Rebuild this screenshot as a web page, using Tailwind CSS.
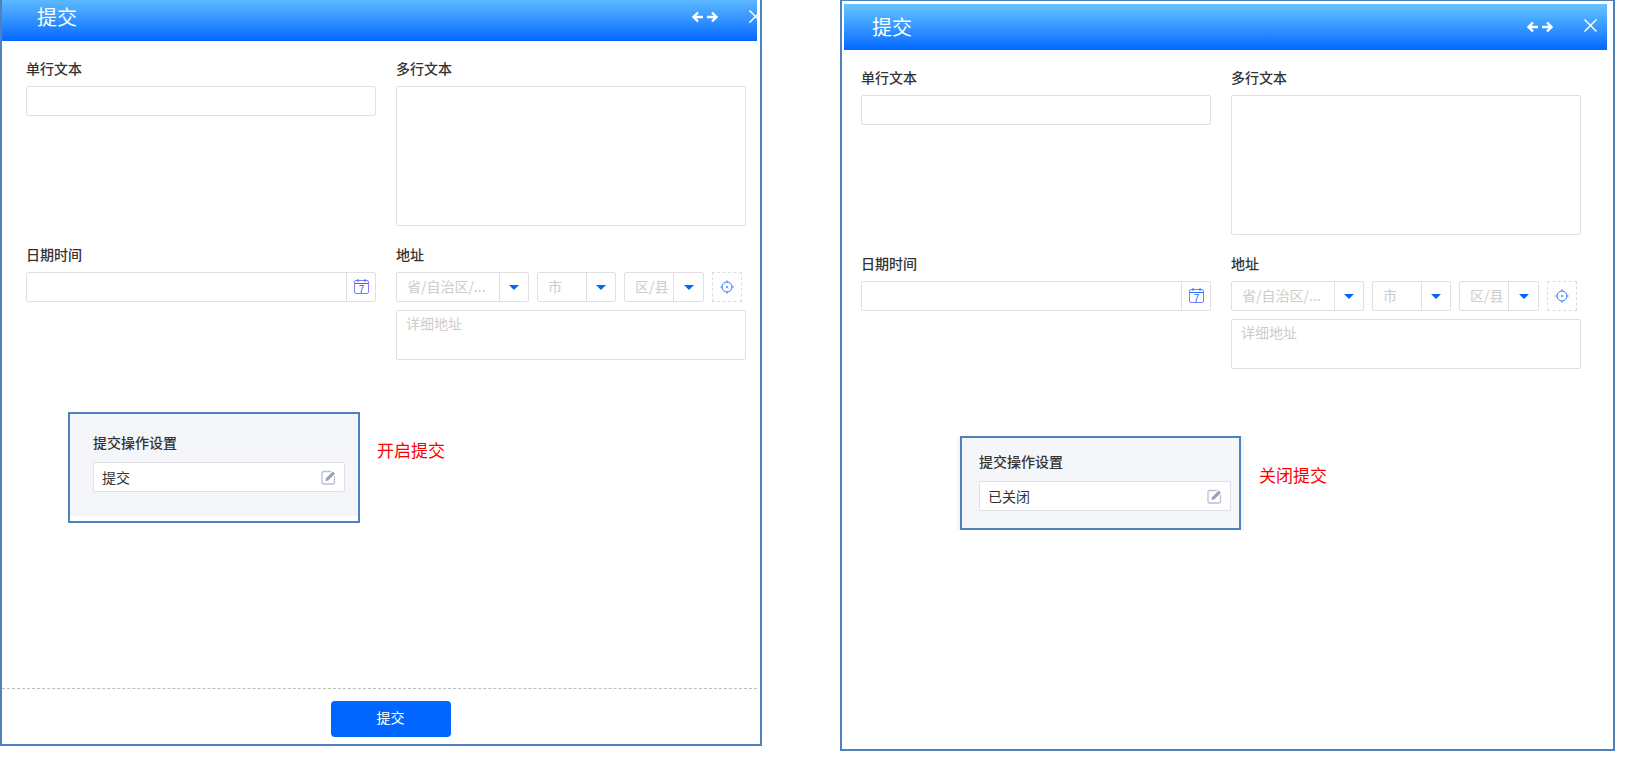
<!DOCTYPE html>
<html lang="zh-CN">
<head>
  <meta charset="UTF-8">
  <meta name="viewport" content="width=device-width, initial-scale=1.0">
  <title>提交操作设置</title>
  <script src="https://cdn.jsdelivr.net/npm/@tailwindcss/browser@4"></script>
</head>
<body class="bg-white font-['Noto_Sans_CJK_SC','Noto_Sans',sans-serif] text-sm text-[#333]">
  <div class="flex items-start w-[1641px] h-[784px] overflow-hidden">

    <!-- open state -->
    <section class="flex flex-col shrink-0 w-[762px] h-[746px] border-x-2 border-b-2 border-[#4f81bd]">
      <header class="flex items-center shrink-0 w-[755px] h-[41px] pb-[7px] pl-[35px] overflow-hidden bg-gradient-to-b from-[#5cb8ff] to-[#0066ff] text-white">
        <h1 class="flex-1 -mt-px text-[20px] leading-[28px]">提交</h1>
        <svg class="shrink-0" width="26" height="12" viewBox="0 0 26 12" fill="none" stroke="white" stroke-width="2.400"><path d="M11 6H2M6 1.500 1.500 6 6 10.500M15 6h9M20 1.500 24.500 6 20 10.500"/></svg>
        <svg class="shrink-0 ml-[31px] -mr-[5px] -mt-[2px]" width="13" height="13" viewBox="0 0 13 13" fill="none" stroke="white" stroke-width="1.500"><path d="m.5.500 12 12M12.500.500l-12 12"/></svg>
      </header>

      <div class="grid grid-cols-[350px_350px] gap-x-5 pl-6 pt-[17px] leading-5">
        <div>
          <label class="block mb-2 font-medium">单行文本</label>
          <div class="h-[30px] border border-[#e0e0e0] rounded-[2px]"></div>
        </div>
        <div>
          <label class="block mb-2 font-medium">多行文本</label>
          <div class="h-[140px] border border-[#e0e0e0] rounded-[2px]"></div>
        </div>
        <div class="mt-[18px]">
          <label class="block mb-2 font-medium">日期时间</label>
          <div class="flex justify-end h-[30px] border border-[#e0e0e0] rounded-[2px]">
            <span class="flex items-center justify-center w-[29px] border-l border-[#e0e0e0]">
              <svg class="-mt-[2px]" width="15" height="15" viewBox="0 0 15 15" fill="none"><rect x=".5" y="1.500" width="14" height="13" rx="1.500" stroke="#7f7bff"/><path d="M1 4.500h13" stroke="#1f70ff"/><path d="M4 0v3M11 0v3" stroke="#1f70ff"/><text x="7.500" y="13.500" text-anchor="middle" font-size="10" fill="#1f63ff" font-family="Liberation Sans">7</text></svg>
            </span>
          </div>
        </div>
        <div class="mt-[18px]">
          <label class="block mb-2 font-medium">地址</label>
          <div class="flex gap-2 text-[#ccc]">
            <div class="flex w-[133px] h-[30px] border border-[#e0e0e0] rounded-[2px]">
              <span class="flex-1 pl-[10px] leading-[26px] whitespace-nowrap overflow-hidden">省/自治区/...</span>
              <span class="flex items-center justify-center w-[29px] border-l border-[#e0e0e0]"><span class="w-0 h-0 border-x-[5px] border-t-[5px] border-x-transparent border-t-[#0066ff]"></span></span>
            </div>
            <div class="flex w-[79px] h-[30px] border border-[#e0e0e0] rounded-[2px]">
              <span class="flex-1 pl-[10px] leading-[26px]">市</span>
              <span class="flex items-center justify-center w-[29px] border-l border-[#e0e0e0]"><span class="w-0 h-0 border-x-[5px] border-t-[5px] border-x-transparent border-t-[#0066ff]"></span></span>
            </div>
            <div class="flex w-[80px] h-[30px] border border-[#e0e0e0] rounded-[2px]">
              <span class="flex-1 pl-[10px] leading-[26px]">区/县</span>
              <span class="flex items-center justify-center w-[30px] border-l border-[#e0e0e0]"><span class="w-0 h-0 border-x-[5px] border-t-[5px] border-x-transparent border-t-[#0066ff]"></span></span>
            </div>
            <div class="flex items-center justify-center w-[30px] h-[30px] border border-dashed border-[#dcdcdc]">
              <svg width="14" height="14" viewBox="0 0 14 14" fill="none" stroke="#2a7bff"><circle cx="7" cy="7" r="5"/><path d="M7 .5v2M7 11.500v2M.5 7h2M11.500 7h2"/><circle cx="7" cy="7" r=".9" fill="#2a7bff" stroke="none"/></svg>
            </div>
          </div>
          <div class="h-[50px] mt-2 pl-[9px] pt-[2px] border border-[#e0e0e0] rounded-[2px] text-[#ccc]">详细地址</div>
        </div>
      </div>

      <div class="flex items-start mt-[52px] ml-[66px] leading-5">
        <div class="w-[292px] h-[111px] border-2 border-[#4f81bd] bg-white">
          <div class="h-[102px] pl-[23px] pr-[13px] pt-[18px] bg-[#f5f6fa]">
            <p class="mb-[10px] font-medium">提交操作设置</p>
            <div class="flex items-center justify-between h-[30px] pl-2 pr-2 bg-white border border-[#e0e0e6] rounded-[2px]">
              <span>提交</span>
              <svg width="15" height="15" viewBox="0 0 15 15" fill="none"><path d="M10 1.500H2.500a1.500 1.500 0 0 0-1.500 1.500v9.500a1.500 1.500 0 0 0 1.500 1.500h9.500a1.500 1.500 0 0 0 1.500-1.500V6" stroke="#b8bfd6" stroke-width="1.300"/><path d="M4.500 11 5 8.300 11.800 1.500 14 3.700 7.200 10.500z" fill="#9aa1b8"/></svg>
            </div>
          </div>
        </div>
        <p class="mt-[26px] ml-[17px] text-[17px] leading-6 text-[#ff0000]">开启提交</p>
      </div>

      <footer class="mt-auto h-[56px] w-[755px] pt-3 border-t border-dashed border-[#bdbdbd]">
        <button class="block ml-[329px] w-[120px] h-9 pb-1 pr-px rounded-[4px] bg-[#0066ff] text-white">提交</button>
      </footer>
    </section>

    <!-- closed state -->
    <section class="flex flex-col shrink-0 ml-[78px] w-[775px] h-[751px] border-x-2 border-t border-b-2 border-[#4f81bd]">
      <header class="flex items-center shrink-0 w-[763px] h-[46px] mt-[3px] ml-[2px] pl-[28px] pr-[10px] bg-gradient-to-b from-[#66c4ff] to-[#0066ff] text-white">
        <h1 class="flex-1 -mt-px text-[20px] leading-[28px]">提交</h1>
        <svg class="shrink-0" width="26" height="12" viewBox="0 0 26 12" fill="none" stroke="white" stroke-width="2.400"><path d="M11 6H2M6 1.500 1.500 6 6 10.500M15 6h9M20 1.500 24.500 6 20 10.500"/></svg>
        <svg class="shrink-0 ml-[31px] -mt-[4px]" width="13" height="13" viewBox="0 0 13 13" fill="none" stroke="white" stroke-width="1.500"><path d="m.5.500 12 12M12.500.500l-12 12"/></svg>
      </header>

      <div class="grid grid-cols-[350px_350px] gap-x-5 pl-[19px] pt-[17px] leading-5">
        <div>
          <label class="block mb-2 font-medium">单行文本</label>
          <div class="h-[30px] border border-[#e0e0e0] rounded-[2px]"></div>
        </div>
        <div>
          <label class="block mb-2 font-medium">多行文本</label>
          <div class="h-[140px] border border-[#e0e0e0] rounded-[2px]"></div>
        </div>
        <div class="mt-[18px]">
          <label class="block mb-2 font-medium">日期时间</label>
          <div class="flex justify-end h-[30px] border border-[#e0e0e0] rounded-[2px]">
            <span class="flex items-center justify-center w-[29px] border-l border-[#e0e0e0]">
              <svg class="-mt-[2px]" width="15" height="15" viewBox="0 0 15 15" fill="none"><rect x=".5" y="1.500" width="14" height="13" rx="1.500" stroke="#7f7bff"/><path d="M1 4.500h13" stroke="#1f70ff"/><path d="M4 0v3M11 0v3" stroke="#1f70ff"/><text x="7.500" y="13.500" text-anchor="middle" font-size="10" fill="#1f63ff" font-family="Liberation Sans">7</text></svg>
            </span>
          </div>
        </div>
        <div class="mt-[18px]">
          <label class="block mb-2 font-medium">地址</label>
          <div class="flex gap-2 text-[#ccc]">
            <div class="flex w-[133px] h-[30px] border border-[#e0e0e0] rounded-[2px]">
              <span class="flex-1 pl-[10px] leading-[26px] whitespace-nowrap overflow-hidden">省/自治区/...</span>
              <span class="flex items-center justify-center w-[29px] border-l border-[#e0e0e0]"><span class="w-0 h-0 border-x-[5px] border-t-[5px] border-x-transparent border-t-[#0066ff]"></span></span>
            </div>
            <div class="flex w-[79px] h-[30px] border border-[#e0e0e0] rounded-[2px]">
              <span class="flex-1 pl-[10px] leading-[26px]">市</span>
              <span class="flex items-center justify-center w-[29px] border-l border-[#e0e0e0]"><span class="w-0 h-0 border-x-[5px] border-t-[5px] border-x-transparent border-t-[#0066ff]"></span></span>
            </div>
            <div class="flex w-[80px] h-[30px] border border-[#e0e0e0] rounded-[2px]">
              <span class="flex-1 pl-[10px] leading-[26px]">区/县</span>
              <span class="flex items-center justify-center w-[30px] border-l border-[#e0e0e0]"><span class="w-0 h-0 border-x-[5px] border-t-[5px] border-x-transparent border-t-[#0066ff]"></span></span>
            </div>
            <div class="flex items-center justify-center w-[30px] h-[30px] border border-dashed border-[#dcdcdc]">
              <svg width="14" height="14" viewBox="0 0 14 14" fill="none" stroke="#2a7bff"><circle cx="7" cy="7" r="5"/><path d="M7 .5v2M7 11.500v2M.5 7h2M11.500 7h2"/><circle cx="7" cy="7" r=".9" fill="#2a7bff" stroke="none"/></svg>
            </div>
          </div>
          <div class="h-[50px] mt-2 pl-[9px] pt-[2px] border border-[#e0e0e0] rounded-[2px] text-[#ccc]">详细地址</div>
        </div>
      </div>

      <div class="flex items-start mt-[67px] ml-[115px] leading-5">
        <div class="px-[3px] bg-[#f5f6fa]">
          <div class="w-[281px] h-[94px] pl-[17px] pr-2 pt-[13px] border-2 border-[#4f81bd] bg-[#f5f6fa]">
            <p class="mb-[10px] font-medium">提交操作设置</p>
            <div class="flex items-center justify-between h-[30px] pl-2 pr-2 bg-white border border-[#e0e0e6] rounded-[2px]">
              <span>已关闭</span>
              <svg width="15" height="15" viewBox="0 0 15 15" fill="none"><path d="M10 1.500H2.500a1.500 1.500 0 0 0-1.500 1.500v9.500a1.500 1.500 0 0 0 1.500 1.500h9.500a1.500 1.500 0 0 0 1.500-1.500V6" stroke="#b8bfd6" stroke-width="1.300"/><path d="M4.500 11 5 8.300 11.800 1.500 14 3.700 7.200 10.500z" fill="#9aa1b8"/></svg>
            </div>
          </div>
        </div>
        <p class="mt-[27px] ml-[15px] text-[17px] leading-6 text-[#ff0000]">关闭提交</p>
      </div>
    </section>

  </div>
</body>
</html>
